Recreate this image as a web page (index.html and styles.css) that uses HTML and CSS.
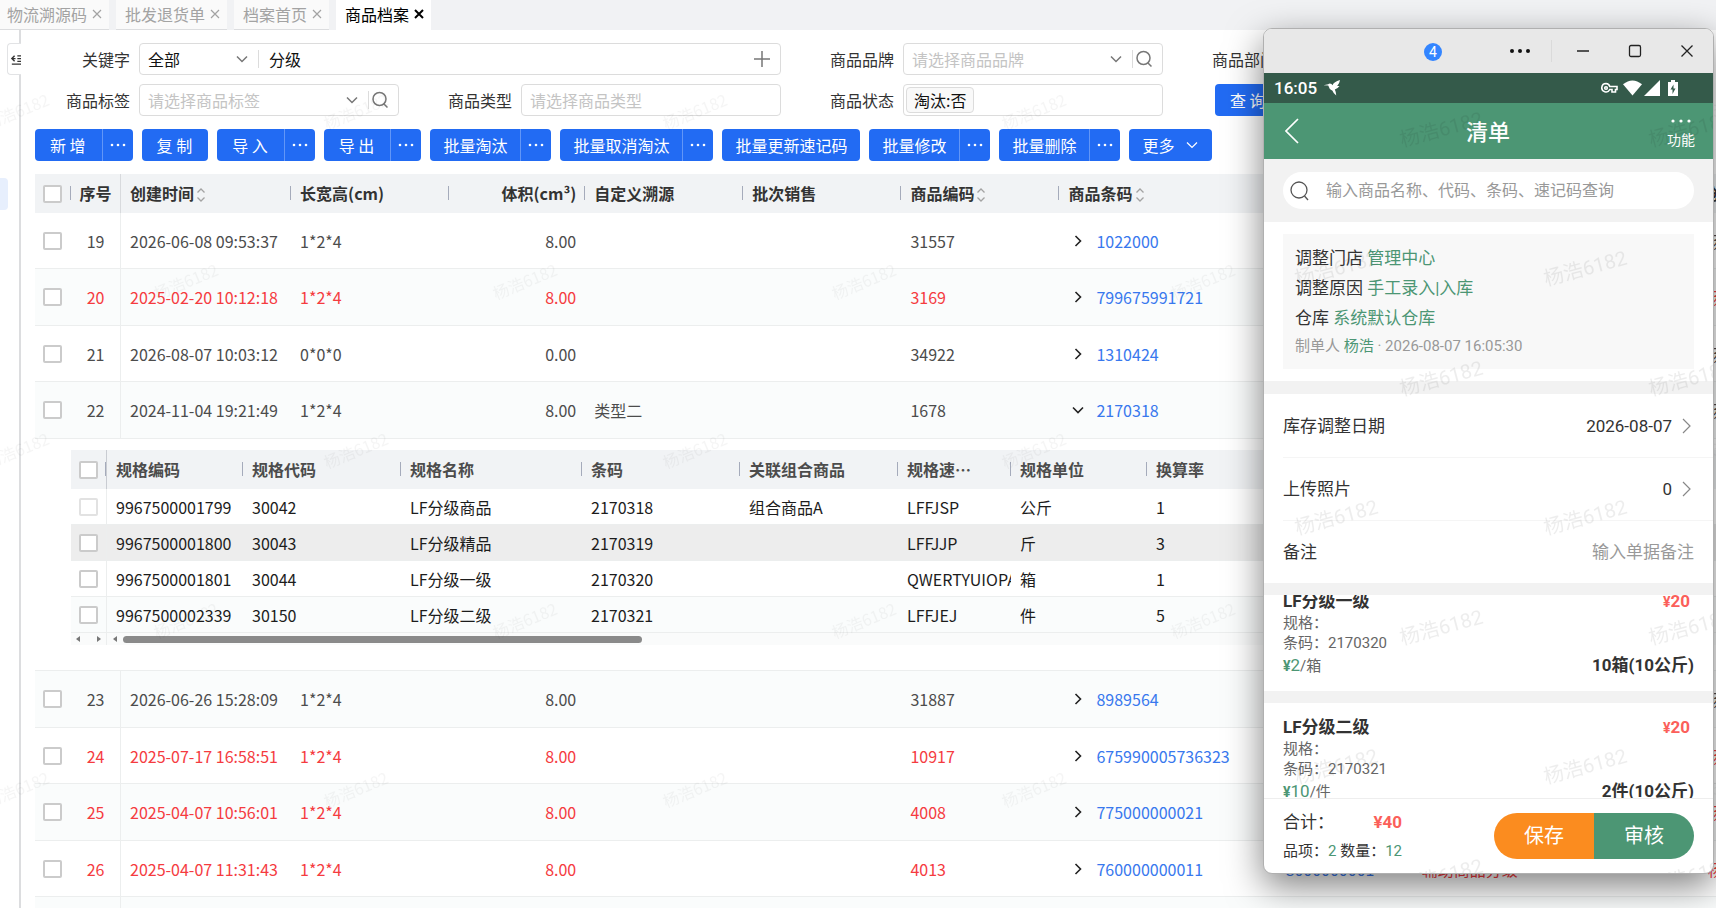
FILE: index.html
```html
<!doctype html>
<html lang="zh-CN">

<head>
    <meta charset="UTF-8" />
    <meta name="viewport" content="width=device-width, initial-scale=1.0" />
    <title>商品档案</title>
    <link rel="stylesheet" href="styles.css">
</head>

<body>
    <!-- iconos -->
    <svg class="sprite" aria-hidden="true">
        <symbol id="i-close" viewBox="0 0 12 12"><path d="M2 2l8 8M10 2l-8 8" /></symbol>
        <symbol id="i-down" viewBox="0 0 14 14"><path d="M2 4.500l5 5 5-5" /></symbol>
        <symbol id="i-right" viewBox="0 0 14 14"><path d="M4.500 2l5 5-5 5" /></symbol>
        <symbol id="i-plus" viewBox="0 0 18 18"><path d="M9 1v16M1 9h16" /></symbol>
        <symbol id="i-search" viewBox="0 0 18 18"><circle cx="8.500" cy="8" r="6.500" /><path d="M13 13l3.500 3.500" /></symbol>
        <symbol id="i-sort" viewBox="0 0 10 16"><path d="M1.500 5.500L5 2l3.500 3.500M1.500 10.500L5 14l3.500-3.500" /></symbol>
        <symbol id="i-dots" viewBox="0 0 18 4"><circle cx="3" cy="2" r="1.300" /><circle cx="9" cy="2" r="1.300" /><circle cx="15" cy="2" r="1.300" /></symbol>
        <symbol id="i-tri-left" viewBox="0 0 6 8"><path d="M5 1v6L1 4z" /></symbol>
        <symbol id="i-tri-right" viewBox="0 0 6 8"><path d="M1 1v6l4-3z" /></symbol>
    </svg>

    <nav class="tabs">
        <div class="tab">物流溯源码<button type="button" aria-label="关闭"><svg><use href="#i-close" /></svg></button></div>
        <div class="tab">批发退货单<button type="button" aria-label="关闭"><svg><use href="#i-close" /></svg></button></div>
        <div class="tab">档案首页<button type="button" aria-label="关闭"><svg><use href="#i-close" /></svg></button></div>
        <div class="tab active">商品档案<button type="button" aria-label="关闭"><svg><use href="#i-close" /></svg></button></div>
    </nav>

    <div class="page">
        <aside class="side">
            <button type="button" class="side-toggle" aria-label="展开">
                <svg viewBox="0 0 12 14"><path d="M5 3L2 6l3 3M2 6h4M8 3h4M8 6h4M8 9h4M2 12h10" /></svg>
            </button>
            <span class="side-mark"></span>
        </aside>

        <main class="main">
            <!-- filtros -->
            <form class="filters">
                <div class="field wide">
                    <label for="keyword">关键字</label>
                    <div class="box">
                        <select id="keywordType" aria-label="关键字类型">
                            <option>全部</option>
                        </select>
                        <svg class="icon chevron"><use href="#i-down" /></svg>
                        <span class="bar"></span>
                        <input type="text" id="keyword" value="分级" />
                        <button type="button" class="icon-btn" aria-label="添加"><svg><use href="#i-plus" /></svg></button>
                    </div>
                </div>
                <div class="field">
                    <label for="brand">商品品牌</label>
                    <div class="box">
                        <input type="text" id="brand" placeholder="请选择商品品牌" />
                        <svg class="icon chevron"><use href="#i-down" /></svg>
                        <span class="bar"></span>
                        <button type="button" class="icon-btn" aria-label="搜索"><svg><use href="#i-search" /></svg></button>
                    </div>
                </div>
                <div class="field">
                    <label for="dept">商品部门</label>
                    <div class="box"><input type="text" id="dept" /></div>
                </div>
                <div class="field">
                    <label for="tag">商品标签</label>
                    <div class="box">
                        <input type="text" id="tag" placeholder="请选择商品标签" />
                        <svg class="icon chevron"><use href="#i-down" /></svg>
                        <span class="bar"></span>
                        <button type="button" class="icon-btn" aria-label="搜索"><svg><use href="#i-search" /></svg></button>
                    </div>
                </div>
                <div class="field">
                    <label for="type">商品类型</label>
                    <div class="box"><input type="text" id="type" placeholder="请选择商品类型" /></div>
                </div>
                <div class="field">
                    <label for="state">商品状态</label>
                    <div class="box">
                        <span class="chip">淘汰:否</span>
                        <input type="text" id="state" />
                    </div>
                </div>
                <div class="query"><button type="button" class="btn short">查 询</button></div>
            </form>

            <!-- botones -->
            <div class="toolbar">
                <div class="group"><button type="button" class="btn short">新 增</button><button type="button" class="btn dots" aria-label="更多"><svg><use href="#i-dots" /></svg></button></div>
                <button type="button" class="btn short">复 制</button>
                <div class="group"><button type="button" class="btn short">导 入</button><button type="button" class="btn dots" aria-label="更多"><svg><use href="#i-dots" /></svg></button></div>
                <div class="group"><button type="button" class="btn short">导 出</button><button type="button" class="btn dots" aria-label="更多"><svg><use href="#i-dots" /></svg></button></div>
                <div class="group"><button type="button" class="btn">批量淘汰</button><button type="button" class="btn dots" aria-label="更多"><svg><use href="#i-dots" /></svg></button></div>
                <div class="group"><button type="button" class="btn">批量取消淘汰</button><button type="button" class="btn dots" aria-label="更多"><svg><use href="#i-dots" /></svg></button></div>
                <button type="button" class="btn">批量更新速记码</button>
                <div class="group"><button type="button" class="btn">批量修改</button><button type="button" class="btn dots" aria-label="更多"><svg><use href="#i-dots" /></svg></button></div>
                <div class="group"><button type="button" class="btn">批量删除</button><button type="button" class="btn dots" aria-label="更多"><svg><use href="#i-dots" /></svg></button></div>
                <button type="button" class="btn more">更多<svg><use href="#i-down" /></svg></button>
            </div>

            <!-- tabla principal -->
            <div class="table-wrap">
                <table class="goods">
                    <colgroup>
                        <col class="w-check"><col class="w-no"><col class="w-time"><col class="w-mid"><col class="w-vol">
                        <col class="w-mid"><col class="w-mid"><col class="w-mid"><col class="w-bar"><col class="w-code"><col class="w-name"><col class="w-mid">
                    </colgroup>
                    <thead>
                        <tr>
                            <th class="check"><input type="checkbox" aria-label="全选" /></th>
                            <th class="no">序号</th>
                            <th>创建时间<svg class="sort"><use href="#i-sort" /></svg></th>
                            <th>长宽高(cm)</th>
                            <th class="num">体积(cm³)</th>
                            <th>自定义溯源</th>
                            <th>批次销售</th>
                            <th>商品编码<svg class="sort"><use href="#i-sort" /></svg></th>
                            <th>商品条码<svg class="sort"><use href="#i-sort" /></svg></th>
                            <th></th>
                            <th></th>
                            <th>创建人</th>
                        </tr>
                    </thead>
                    <tbody>
                        <tr>
                            <td class="check"><input type="checkbox" aria-label="19" /></td>
                            <td class="no">19</td><td>2026-06-08 09:53:37</td><td>1*2*4</td><td class="num">8.00</td><td></td><td></td><td>31557</td>
                            <td class="barcode"><svg class="arrow"><use href="#i-right" /></svg><a href="#">1022000</a></td><td></td><td></td><td>杨浩</td>
                        </tr>
                        <tr class="off">
                            <td class="check"><input type="checkbox" aria-label="20" /></td>
                            <td class="no">20</td><td>2025-02-20 10:12:18</td><td>1*2*4</td><td class="num">8.00</td><td></td><td></td><td>3169</td>
                            <td class="barcode"><svg class="arrow"><use href="#i-right" /></svg><a href="#">799675991721</a></td><td></td><td></td><td>杨浩</td>
                        </tr>
                        <tr>
                            <td class="check"><input type="checkbox" aria-label="21" /></td>
                            <td class="no">21</td><td>2026-08-07 10:03:12</td><td>0*0*0</td><td class="num">0.00</td><td></td><td></td><td>34922</td>
                            <td class="barcode"><svg class="arrow"><use href="#i-right" /></svg><a href="#">1310424</a></td><td></td><td></td><td>杨浩</td>
                        </tr>
                        <tr>
                            <td class="check"><input type="checkbox" aria-label="22" /></td>
                            <td class="no">22</td><td>2024-11-04 19:21:49</td><td>1*2*4</td><td class="num">8.00</td><td>类型二</td><td></td><td>1678</td>
                            <td class="barcode"><svg class="arrow"><use href="#i-down" /></svg><a href="#">2170318</a></td><td></td><td></td><td>杨浩</td>
                        </tr>
                        <tr class="detail">
                            <td colspan="12">
                                <table class="specs">
                                    <colgroup>
                                        <col class="w-check"><col class="s-136"><col class="s-158"><col class="s-181"><col class="s-158"><col class="s-158"><col class="s-113"><col class="s-136"><col>
                                    </colgroup>
                                    <thead>
                                        <tr>
                                            <th class="check"><input type="checkbox" aria-label="全选规格" /></th>
                                            <th>规格编码</th><th>规格代码</th><th>规格名称</th><th>条码</th><th>关联组合商品</th><th>规格速…</th><th>规格单位</th><th>换算率</th>
                                        </tr>
                                    </thead>
                                    <tbody>
                                        <tr>
                                            <td class="check"><input type="checkbox" aria-label="30042" disabled /></td>
                                            <td>9967500001799</td><td>30042</td><td>LF分级商品</td><td>2170318</td><td>组合商品A</td><td>LFFJSP</td><td>公斤</td><td>1</td>
                                        </tr>
                                        <tr class="hover">
                                            <td class="check"><input type="checkbox" aria-label="30043" /></td>
                                            <td>9967500001800</td><td>30043</td><td>LF分级精品</td><td>2170319</td><td></td><td>LFFJJP</td><td>斤</td><td>3</td>
                                        </tr>
                                        <tr>
                                            <td class="check"><input type="checkbox" aria-label="30044" /></td>
                                            <td>9967500001801</td><td>30044</td><td>LF分级一级</td><td>2170320</td><td></td><td>QWERTYUIOPA</td><td>箱</td><td>1</td>
                                        </tr>
                                        <tr>
                                            <td class="check"><input type="checkbox" aria-label="30150" /></td>
                                            <td>9967500002339</td><td>30150</td><td>LF分级二级</td><td>2170321</td><td></td><td>LFFJEJ</td><td>件</td><td>5</td>
                                        </tr>
                                    </tbody>
                                </table>
                                <div class="scroll">
                                    <div class="scroll-fixed"><svg><use href="#i-tri-left" /></svg><svg><use href="#i-tri-right" /></svg></div>
                                    <svg><use href="#i-tri-left" /></svg>
                                    <span class="thumb"></span>
                                </div>
                            </td>
                        </tr>
                        <tr>
                            <td class="check"><input type="checkbox" aria-label="23" /></td>
                            <td class="no">23</td><td>2026-06-26 15:28:09</td><td>1*2*4</td><td class="num">8.00</td><td></td><td></td><td>31887</td>
                            <td class="barcode"><svg class="arrow"><use href="#i-right" /></svg><a href="#">8989564</a></td><td></td><td></td><td>杨浩</td>
                        </tr>
                        <tr class="off">
                            <td class="check"><input type="checkbox" aria-label="24" /></td>
                            <td class="no">24</td><td>2025-07-17 16:58:51</td><td>1*2*4</td><td class="num">8.00</td><td></td><td></td><td>10917</td>
                            <td class="barcode"><svg class="arrow"><use href="#i-right" /></svg><a href="#">675990005736323</a></td><td></td><td></td><td>杨浩</td>
                        </tr>
                        <tr class="off">
                            <td class="check"><input type="checkbox" aria-label="25" /></td>
                            <td class="no">25</td><td>2025-04-07 10:56:01</td><td>1*2*4</td><td class="num">8.00</td><td></td><td></td><td>4008</td>
                            <td class="barcode"><svg class="arrow"><use href="#i-right" /></svg><a href="#">775000000021</a></td><td></td><td></td><td>杨浩</td>
                        </tr>
                        <tr class="off">
                            <td class="check"><input type="checkbox" aria-label="26" /></td>
                            <td class="no">26</td><td>2025-04-07 11:31:43</td><td>1*2*4</td><td class="num">8.00</td><td></td><td></td><td>4013</td>
                            <td class="barcode"><svg class="arrow"><use href="#i-right" /></svg><a href="#">760000000011</a></td><td><a href="#">8000000001</a></td><td>辅助商品分级</td><td>杨浩</td>
                        </tr>
                        <tr>
                            <td></td><td class="no"></td><td></td><td></td><td></td><td></td><td></td><td></td><td></td><td></td><td></td><td></td>
                        </tr>
                    </tbody>
                </table>
            </div>
        </main>
    </div>

    <svg class="watermark" aria-hidden="true">
        <pattern id="wm-page" x="-20" y="80" width="339" height="339" patternUnits="userSpaceOnUse">
            <text transform="translate(8 50) rotate(-22)">杨浩6182</text>
            <text transform="translate(177 220) rotate(-22)">杨浩6182</text>
        </pattern>
        <rect width="100%" height="100%" fill="url(#wm-page)" />
    </svg>

    <!-- ventana del movil -->
    <section class="phone">
        <header class="titlebar">
            <span class="badge">4</span>
            <button type="button" class="t-dots" aria-label="菜单"><svg viewBox="0 0 20 4"><circle cx="2" cy="2" r="2" /><circle cx="10" cy="2" r="2" /><circle cx="18" cy="2" r="2" /></svg></button>
            <span class="t-bar"></span>
            <button type="button" aria-label="最小化"><svg viewBox="0 0 14 14"><path d="M1 7h12" /></svg></button>
            <button type="button" aria-label="最大化"><svg viewBox="0 0 14 14"><rect x="1.500" y="1.500" width="11" height="11" rx="1.500" /></svg></button>
            <button type="button" aria-label="关闭"><svg viewBox="0 0 14 14"><path d="M1.500 1.500l11 11M12.500 1.500l-11 11" /></svg></button>
        </header>

        <div class="screen">
            <div class="status">
                <span>16:05</span>
                <svg class="bird" viewBox="0 0 18 17"><path d="M0 5.500L5 4.500Q6.500 2.800 8.500 4.300L9.500 5.500Q11 1.800 17.500 0Q17 4 14.500 6.500Q16.500 6 17 6.500Q15 9.500 12 10Q13.500 13 13.500 16.500Q10.500 14.500 9.500 11.500Q6 10 5 5.800Z" /></svg>
                <span class="grow"></span>
                <svg class="key" viewBox="0 0 17 12"><path d="M5 1.500a4.200 4.200 0 1 0 3.800 6H11v2.500h3.500V7.500H16v-3H8.800A4.200 4.200 0 0 0 5 1.500z" /><circle cx="5" cy="6" r="1.300" /></svg>
                <svg class="wifi" viewBox="0 0 20 16"><path d="M10 16L0 4Q10-4 20 4Z" /></svg>
                <svg class="cell" viewBox="0 0 16 16"><path d="M16 0v16H0z" /></svg>
                <svg class="battery" viewBox="0 0 10 16"><path d="M3 0h4v2h3v14H0V2h3z" /><path class="bolt" d="M5.500 4.500L2.500 9.500h2V14l3-5.500h-2z" /></svg>
            </div>
            <div class="appbar">
                <button type="button" class="back" aria-label="返回"><svg viewBox="0 0 14 26"><path d="M13 1L1 13l12 12" /></svg></button>
                <h1>清单</h1>
                <button type="button" class="func"><svg viewBox="0 0 20 4"><circle cx="2" cy="2" r="1.600" /><circle cx="10" cy="2" r="1.600" /><circle cx="18" cy="2" r="1.600" /></svg>功能</button>
            </div>
            <div class="search">
                <label class="search-box">
                    <svg viewBox="0 0 20 20"><circle cx="9" cy="9" r="8" /><path d="M14.500 15l3.500 4" /></svg>
                    <input type="text" placeholder="输入商品名称、代码、条码、速记码查询" />
                </label>
            </div>

            <div class="info">
                <div class="card">
                    <p>调整门店 <em>管理中心</em></p>
                    <p>调整原因 <em>手工录入|入库</em></p>
                    <p>仓库 <em>系统默认仓库</em></p>
                    <p class="maker">制单人 <em>杨浩</em> · 2026-08-07 16:05:30</p>
                </div>
            </div>

            <div class="cells">
                <div class="cell-row"><span>库存调整日期</span><span class="value">2026-08-07</span><svg viewBox="0 0 10 16"><path d="M1 1l7 7-7 7" /></svg></div>
                <div class="cell-row"><span>上传照片</span><span class="value">0</span><svg viewBox="0 0 10 16"><path d="M1 1l7 7-7 7" /></svg></div>
                <div class="cell-row"><label for="memo">备注</label><input type="text" id="memo" placeholder="输入单据备注" /></div>
            </div>

            <div class="list">
                <article class="item">
                    <div class="line title"><b>LF分级一级</b><b class="red"><small>¥</small>20</b></div>
                    <div class="sub">规格：</div>
                    <div class="sub">条码：2170320</div>
                    <div class="line"><span class="unit"><em><b>¥</b>2</em>/箱</span><b>10箱(10公斤)</b></div>
                </article>
                <article class="item">
                    <div class="line title"><b>LF分级二级</b><b class="red"><small>¥</small>20</b></div>
                    <div class="sub">规格：</div>
                    <div class="sub">条码：2170321</div>
                    <div class="line"><span class="unit"><em><b>¥</b>10</em>/件</span><b>2件(10公斤)</b></div>
                </article>
            </div>

            <footer class="total">
                <div class="sum">
                    <div class="line"><span>合计：</span><b class="red">¥40</b></div>
                    <div class="count">品项：<em>2</em> 数量：<em>12</em></div>
                </div>
                <div class="actions"><button type="button" class="save">保存</button><button type="button" class="audit">审核</button></div>
            </footer>

            <svg class="watermark phone-mark" aria-hidden="true">
                <pattern id="wm-phone" x="20" y="30" width="249" height="249" patternUnits="userSpaceOnUse">
                    <text transform="translate(118 44) rotate(-15)">杨浩6182</text>
                    <text transform="translate(13 183) rotate(-15)">杨浩6182</text>
                </pattern>
                <rect width="100%" height="100%" fill="url(#wm-phone)" />
            </svg>
        </div>
    </section>
</body>

</html>
```

FILE: styles.css
```css
*,
*::before,
*::after {
    box-sizing: border-box;
}

:root {
    --blue: #226bf3;
    --green: #4c9674;
    --red: #f53b3f;
    --line: #eceeee;
}

body {
    margin: 0;
    height: 100vh;
    overflow: hidden;
    position: relative;
    display: flex;
    flex-direction: column;
    background: #fff;
    color: #333;
    font-family: 'Noto Sans CJK SC', 'Noto Sans', sans-serif;
    font-size: 16px;
    line-height: 24px;
}

button,
input,
select {
    font: inherit;
    color: inherit;
    margin: 0;
    padding: 0;
    border: 0;
    background: none;
}

input:focus {
    outline: 0;
}

svg {
    display: block;
    fill: none;
    stroke: currentColor;
    flex: none;
}

a {
    color: #3878ee;
    text-decoration: none;
}

em {
    font-style: normal;
    color: var(--green);
}

.sprite {
    display: none;
}

/* tabs */
.tabs {
    display: flex;
    gap: 7px;
    height: 30px;
    flex: none;
    margin-left: -2px;
    background: #f1f2f4;
}

.tab {
    display: flex;
    align-items: center;
    gap: 4px;
    padding: 0 6px 2px 9px;
    background: #fafafa;
    border-bottom: 1px solid #dcdddf;
    color: #a3a3a3;
}

.tab.active {
    background: #fff;
    border-color: #fff;
    color: #000;
}

.tab svg {
    width: 12px;
    height: 12px;
    stroke-width: 1.2;
}

.tab.active svg {
    stroke-width: 2;
}

/* barra lateral */
.page {
    flex: 1;
    display: flex;
    min-height: 0;
}

.side {
    width: 21px;
    flex: none;
    display: flex;
    flex-direction: column;
    align-items: flex-start;
    gap: 103px;
    padding-top: 13px;
    border-right: 2px solid #dcdddf;
}

.side-toggle {
    width: 14px;
    height: 32px;
    margin-left: 7px;
    padding-left: 2px;
    border: 1px solid #e2e3e5;
    border-right: 0;
    border-radius: 4px 0 0 4px;
    background: #fff;
}

.side-toggle svg {
    width: 11px;
    height: 13px;
    stroke-width: 1.5;
}

.side-mark {
    width: 8px;
    height: 32px;
    border-radius: 0 4px 4px 0;
    background: #e7effd;
}

.main {
    flex: 1;
    min-width: 0;
    padding: 13px 0 0 14px;
    overflow: hidden;
}

/* filtros */
.filters {
    display: grid;
    grid-template-columns: repeat(4, 364px);
    gap: 9px 18px;
}

.field {
    display: flex;
    align-items: center;
    gap: 9px;
}

.field.wide {
    grid-column: span 2;
}

.field>label {
    width: 95px;
    flex: none;
    text-align: right;
    line-height: 32px;
}

.box {
    flex: 1;
    min-width: 0;
    height: 32px;
    display: flex;
    align-items: center;
    padding-right: 9px;
    border: 1px solid #dcdcdc;
    border-radius: 4px;
}

.box input {
    flex: 1;
    min-width: 0;
    height: 30px;
    padding-left: 8px;
    color: #111;
}

.box input::placeholder {
    color: #c4c4c4;
}

.box select {
    appearance: none;
    width: 95px;
    padding-left: 8px;
    color: #111;
}

.chevron {
    width: 14px;
    height: 14px;
    margin-right: 9px;
    color: #777;
    stroke-width: 1.5;
}

.bar {
    width: 1px;
    height: 18px;
    margin-right: 2px;
    background: #dcdcdc;
}

.icon-btn svg {
    width: 18px;
    height: 18px;
    color: #777;
    stroke-width: 1.5;
}

.chip {
    height: 26px;
    margin-left: 2px;
    padding: 0 7px;
    border: 1px solid #dcdcdc;
    border-radius: 4px;
    background: #f9f9f9;
    color: #111;
}

.query {
    padding-left: 34px;
}

/* botones */
.btn {
    height: 32px;
    padding: 0 13px;
    border-radius: 4px;
    background: var(--blue);
    color: #fff;
    white-space: nowrap;
}

.btn.short {
    padding: 0 16px 0 15px;
}

.toolbar {
    display: flex;
    gap: 9px;
    margin: 13px 0;
}

.group {
    display: flex;
}

.group .btn:first-child {
    border-radius: 4px 0 0 4px;
}

.group .dots {
    width: 31px;
    padding: 0 6px;
    border-left: 1px solid #6296f7;
    border-radius: 0 4px 4px 0;
}

.dots svg {
    width: 18px;
    height: 4px;
    fill: #fff;
    stroke: none;
}

.more {
    display: flex;
    align-items: center;
    gap: 11px;
}

.more svg {
    width: 14px;
    height: 14px;
    stroke-width: 1.2;
}

/* tablas */
table {
    border-spacing: 0;
    table-layout: fixed;
    width: 100%;
}

th,
td {
    padding: 0 9px;
    text-align: left;
    white-space: nowrap;
    overflow: hidden;
}

th {
    position: relative;
    height: 39px;
    padding-bottom: 2px;
    font-weight: 700;
    background: #f1f3f5;
}

/* separador de columnas */
th::after {
    content: '';
    position: absolute;
    right: 0;
    top: 12px;
    width: 1px;
    height: 14px;
    background: #a5abbb;
}

th.no::after,
th:last-child::after {
    display: none;
}

.goods {
    min-width: 1822px;
}

.w-check { width: 36px; }
.w-no { width: 50px; }
.w-time { width: 170px; }
.w-mid { width: 158px; }
.w-vol { width: 136px; }
.w-bar { width: 217px; }
.w-code { width: 136px; }
.w-name { width: 286px; }
.s-113 { width: 113px; }
.s-136 { width: 136px; }
.s-158 { width: 158px; }
.s-181 { width: 181px; }

.goods>tbody>tr>td {
    height: 56px;
    border-bottom: 1px solid var(--line);
    color: #4c4c4c;
}

.goods>tbody>tr:nth-child(even)>td {
    height: 57px;
    background: #fafcfc;
}

.goods>tbody>tr.off>td {
    color: var(--red);
}

.goods .no {
    padding: 0;
    text-align: center;
    border-right: 1px solid var(--line);
}

.goods th.no {
    padding-bottom: 2px;
    border-color: #d8dadd;
}

.goods .num {
    text-align: right;
}

.check {
    padding: 0 0 0 8px;
}

.check input {
    appearance: none;
    display: block;
    width: 19px;
    height: 18px;
    border: 2px solid #cbcbcb;
    border-radius: 2px;
    background: #fff;
}

.check input:disabled {
    border-color: #e2e2e2;
}

.sort {
    display: inline-block;
    vertical-align: -3px;
    width: 12px;
    height: 16px;
    margin-left: 1px;
    color: #a3a3a3;
    stroke-width: 1.3;
}

.arrow {
    display: inline-block;
    vertical-align: 0;
    width: 14px;
    height: 14px;
    margin: 0 11px 0 3px;
    color: #222;
    stroke-width: 1.6;
}

/* fila desplegada */
.goods>tbody>tr.detail>td {
    padding: 11px 0 25px 36px;
}

.goods .specs td {
    height: 36px;
    border-bottom: 1px solid var(--line);
    color: #1c1c1c;
}

.specs th:nth-child(7),
.specs td:nth-child(7) {
    padding-right: 0;
}

.specs .check {
    border-right: 1px solid var(--line);
}

.specs th.check {
    border-color: #c9ccd2;
}

.specs .hover td {
    background: #ededed;
}

.specs tbody tr:last-child td {
    background: #fafcfc;
}

.scroll {
    display: flex;
    align-items: center;
    gap: 5px;
    height: 12px;
    background: #fafbfb;
}

.scroll svg {
    width: 6px;
    height: 8px;
    fill: #777;
    stroke: none;
}

.scroll-fixed {
    display: flex;
    justify-content: space-between;
    width: 36px;
    padding: 2px 4px;
    border-right: 1px solid var(--line);
}

.thumb {
    width: 519px;
    height: 7px;
    border-radius: 4px;
    background: #8a8a8a;
}

/* marca de agua */
.watermark {
    position: absolute;
    top: 0;
    left: 0;
    width: 100%;
    height: 100%;
    pointer-events: none;
    stroke: none;
}

.watermark text {
    font-size: 16px;
    fill: rgba(0, 0, 0, 0.04);
}

.phone-mark text {
    font-size: 20px;
    fill: rgba(0, 0, 0, 0.07);
}

/* ventana del movil */
.phone {
    position: absolute;
    top: 28px;
    right: 2px;
    width: 451px;
    border: 1px solid #b0b0b0;
    border-radius: 9px;
    overflow: hidden;
    background: #fff;
    box-shadow: 0 12px 36px rgba(0, 0, 0, 0.5);
    font-family: Roboto, 'Noto Sans CJK SC', sans-serif;
    font-size: 17px;
}

.phone b {
    font-weight: 700;
}

.titlebar {
    display: flex;
    align-items: center;
    height: 44px;
    padding-right: 19px;
    background: #e8e8e8;
    color: #222;
}

.titlebar svg {
    width: 14px;
    height: 14px;
    stroke-width: 1.3;
}

.titlebar button + button {
    margin-left: 38px;
}

.titlebar .t-dots svg {
    width: 20px;
    height: 4px;
    fill: #111;
    stroke: none;
}

.t-bar {
    width: 1px;
    height: 22px;
    margin: 0 24px 0 21px;
    background: #dadada;
}

.badge {
    width: 18px;
    height: 18px;
    margin: 2px auto 0 160px;
    border-radius: 50%;
    background: #3385ff;
    color: #fff;
    font-size: 14px;
    line-height: 18px;
    text-align: center;
}

.screen {
    position: relative;
}

.status {
    display: flex;
    align-items: center;
    height: 30px;
    padding: 0 35px 0 10px;
    background: #345a4a;
    color: #fff;
    font-weight: 500;
}

.status svg {
    fill: #fff;
    stroke: none;
    height: 16px;
}

.status .bird {
    width: 18px;
    margin-left: 6px;
}

.grow {
    flex: 1;
}

.status .key {
    width: 17px;
    height: 12px;
    fill: none;
    stroke: #fff;
    stroke-width: 1.6;
    margin-right: 5px;
}

.status .wifi {
    width: 19px;
    margin-right: 2px;
}

.status .cell {
    width: 16px;
    margin-right: 8px;
}

.status .battery {
    width: 10px;
}

.status .bolt {
    fill: #345a4a;
}

.appbar {
    display: flex;
    align-items: center;
    justify-content: space-between;
    height: 56px;
    padding: 0 18px 0 21px;
    background: var(--green);
    color: #fff;
}

.appbar h1 {
    margin: 4px 0 0;
    font-size: 22px;
    font-weight: 500;
}

.back {
    width: 24px;
}

.back svg {
    width: 14px;
    height: 26px;
    stroke-width: 1.7;
}

.func {
    font-size: 14px;
    line-height: 20px;
}

.func svg {
    width: 20px;
    height: 4px;
    margin: 6px auto 7px;
    fill: #fff;
    stroke: none;
}

.search {
    padding: 13px 19px;
    background: #f2f2f2;
}

.search-box {
    display: flex;
    align-items: center;
    gap: 16px;
    height: 37px;
    padding: 0 7px;
    border-radius: 19px;
    background: #fff;
}

.search-box svg {
    width: 20px;
    height: 20px;
    color: #555;
    stroke-width: 1.3;
}

.search-box input {
    flex: 1;
    min-width: 0;
    font-size: 16px;
}

.phone input::placeholder {
    color: #999;
}

.info {
    padding: 12px 19px;
    border-bottom: 13px solid #f2f2f2;
}

.card {
    padding: 9px 12px;
    background: #f8f8f8;
}

.card p {
    margin: 0;
    line-height: 30px;
}

.card .maker {
    font-size: 15px;
    line-height: 27px;
    color: #999;
}

.cells {
    padding-left: 19px;
    border-bottom: 12px solid #f2f2f2;
}

.cell-row {
    display: flex;
    align-items: center;
    gap: 10px;
    height: 63px;
    padding-right: 19px;
}

.cell-row + .cell-row {
    border-top: 1px solid #f5f5f5;
}

.cell-row .value {
    margin-left: auto;
}

.cell-row svg {
    width: 10px;
    height: 16px;
    margin-right: 2px;
    color: #888;
    stroke-width: 1.2;
}

.cell-row input {
    flex: 1;
    min-width: 0;
    text-align: right;
}

/* la lista queda desplazada bajo la cabecera */
.list {
    height: 203px;
    overflow: hidden;
}

.item {
    padding: 13px 19px;
}

.item:first-child {
    margin-top: -18px;
}

.item + .item {
    border-top: 12px solid #f2f2f2;
}

.line {
    display: flex;
    justify-content: space-between;
    line-height: 24px;
}

.item .title {
    padding-right: 4px;
    line-height: 22px;
}

.red {
    color: #fb5f5a;
}

.red small {
    font-size: 14px;
}

.sub {
    font-size: 15px;
    line-height: 20px;
    color: #666;
}

.unit {
    font-size: 15px;
    color: #666;
}

.unit em {
    font-size: 17px;
}

.unit em b {
    font-size: 14px;
}

.total {
    display: flex;
    align-items: center;
    justify-content: space-between;
    height: 75px;
    padding: 0 19px;
    border-top: 1px solid #eee;
}

.sum .line {
    margin-bottom: 5px;
}

.count {
    font-size: 15px;
}

.actions {
    display: flex;
    border-radius: 23px;
    overflow: hidden;
}

.actions button {
    width: 100px;
    height: 46px;
    color: #fff;
    font-size: 20px;
}

.save {
    background: #fb8c1f;
}

.audit {
    background: var(--green);
}
```
